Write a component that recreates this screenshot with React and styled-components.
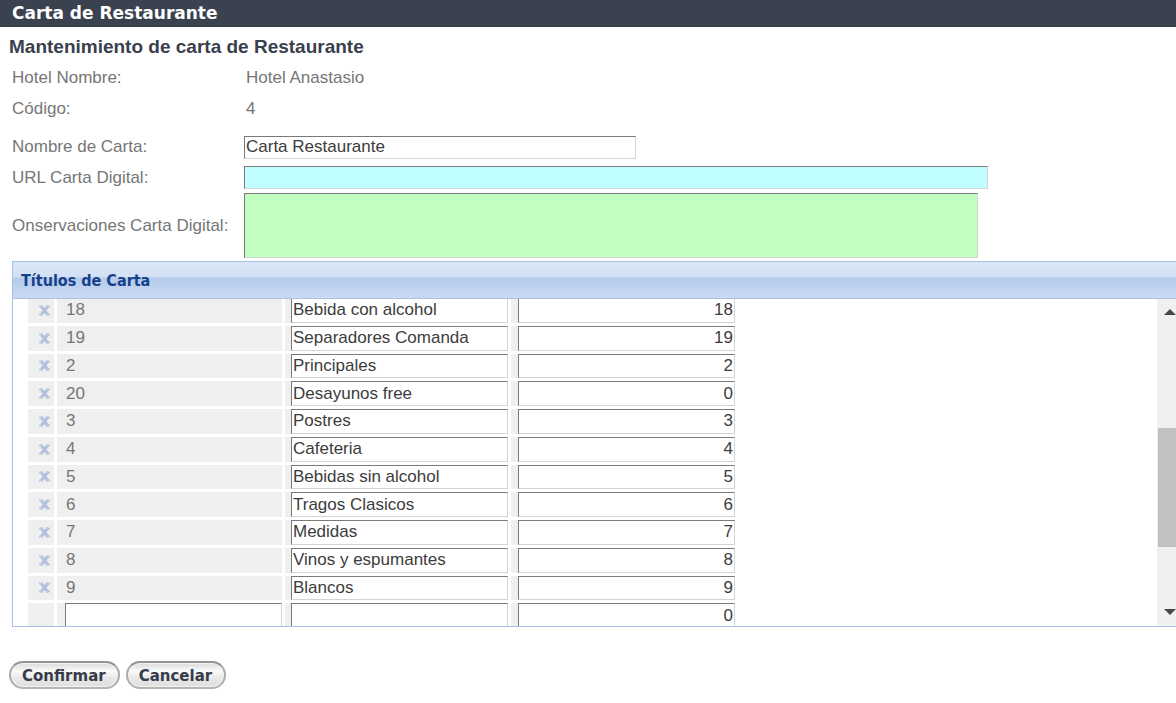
import React from "react";
import styled, { createGlobalStyle, css } from "styled-components";

const GlobalStyle = createGlobalStyle`
  *, *::before, *::after { box-sizing: border-box; }
  body {
    margin: 0;
    background: #fff;
    color: #404040;
    font: 17px/20px "Liberation Sans", Arial, sans-serif;
    overflow-x: hidden;
  }
`;

const sunken = css`
  border: 1px solid;
  border-color: #7a7a7a #d4d4d4 #d4d4d4 #7a7a7a;
  border-radius: 0;
  outline: none;
  color: #3c3c3c;
  font: inherit;
`;

const TitleBar = styled.header`
  background: #3a414f;
  border-bottom: 1px solid #343a46;
`;

const AppTitle = styled.h1`
  margin: 0;
  padding: 0 12px;
  color: #fff;
  font: bold 17px/26px "DejaVu Sans", Verdana, sans-serif;
`;

const PageTitle = styled.h2`
  margin: 0;
  padding: 5px 9px 0;
  color: #3a3f4d;
  font-size: 19px;
  line-height: 30px;
`;

const Group = styled.div`
  margin-top: ${(p) => (p.$spaced ? "8px" : "0")};
  padding-left: 12px;
  color: #767676;
`;

const Field = styled.div`
  display: grid;
  grid-template-columns: 232px minmax(0, 1fr);
  align-items: center;
  min-height: ${(p) => (p.$tall ? "31px" : "30px")};
`;

const Value = styled.output`
  padding-left: 2px;
`;

const TextInput = styled.input`
  ${sunken}
  width: ${(p) => p.$width}px;
  max-width: 100%;
  height: 23px;
  padding: 0 1px;
  background: ${(p) => p.$tint || "#fff"};
`;

const Notes = styled.textarea`
  ${sunken}
  display: block;
  width: 734px;
  max-width: 100%;
  height: 65px;
  padding: 1px;
  background: #c0ffc0;
  resize: none;
`;

const Panel = styled.section`
  margin: 3px 0 0 12px;
  border: 1px solid #a9c1e6;
  border-right: 0;
`;

const PanelTitle = styled.h3`
  margin: 0;
  padding: 1px 8px 0;
  border-bottom: 1px solid #a9c1e6;
  background: linear-gradient(#d9e6f6 0%, #d3e1f4 40%, #b6cbea 46%, #c9daf4 100%);
  color: #15428b;
  font: bold 16px/35px "DejaVu Sans Condensed", Tahoma, sans-serif;
`;

const PanelBody = styled.div`
  display: flex;
  height: 327px;
`;

const Viewport = styled.div`
  flex: 1;
  min-width: 0;
  overflow: hidden;
`;

const Table = styled.table`
  table-layout: fixed;
  width: 713px;
  height: 336px;
  margin: -4px 0 0 12px;
  border-spacing: 3px;
`;

const Cell = styled.td`
  width: ${(p) => p.$width}px;
  height: 1px;
  padding: 0 0 0 ${(p) => p.$inset || 0}px;
  background: #efefef;
  color: #767676;
`;

const CellInput = styled.input`
  ${sunken}
  display: block;
  width: 100%;
  height: 100%;
  padding: 0 1px;
  background: #fff;
  text-align: ${(p) => (p.$numeric ? "right" : "left")};
`;

const DeleteButton = styled.button`
  display: block;
  margin-left: 11px;
  padding: 0;
  border: 0;
  background: none;
  line-height: 0;
`;

const Scrollbar = styled.div`
  display: flex;
  flex-direction: column;
  align-items: flex-end;
  width: 19px;
  padding: 9px 0 10px;
  background: #f0f0f0;
`;

const Track = styled.div`
  flex: 1;
  align-self: stretch;
  padding: 113px 0 0 1px;
`;

const Thumb = styled.div`
  height: 119px;
  background: #c1c1c1;
`;

const Actions = styled.div`
  display: flex;
  gap: 6px;
  padding: 34px 9px 12px;
`;

const ActionButton = styled.button`
  height: 28px;
  padding: 1px 12px 0 11px;
  border: 2px solid;
  border-color: #949494 #ababab #b4b4b4;
  border-radius: 14px;
  background: linear-gradient(#dadada, #fbfbfb 35%, #e9e9e9 60%, #dedede);
  box-shadow: inset 0 0 1px 1px #f4f4f4;
  color: #363c49;
  font: bold 15px/22px "DejaVu Sans", Verdana, sans-serif;
`;

const Arrow = ({ down }) => (
  <svg width="12" height="7" viewBox="0 0 12 7" aria-hidden="true">
    <path d={down ? "M0 0h12L6 6z" : "M0 7h12L6 1z"} fill="#484848" />
  </svg>
);

const Cross = () => (
  <svg width="11" height="11" viewBox="0 0 11 11" aria-hidden="true">
    <path d="M2 1l7 9M9 1l-7 9" stroke="#b3c1de" strokeWidth="3" />
    <path d="M0 1.5h4M7 1.5h4M0 9.5h4M7 9.5h4" stroke="#bdc9e1" strokeWidth="2" />
  </svg>
);

const titles = [
  ["18", "Bebida con alcohol", "18"],
  ["19", "Separadores Comanda", "19"],
  ["2", "Principales", "2"],
  ["20", "Desayunos free", "0"],
  ["3", "Postres", "3"],
  ["4", "Cafeteria", "4"],
  ["5", "Bebidas sin alcohol", "5"],
  ["6", "Tragos Clasicos", "6"],
  ["7", "Medidas", "7"],
  ["8", "Vinos y espumantes", "8"],
  ["9", "Blancos", "9"],
  ["", "", "0"],
];

export default function App() {
  return (
    <>
      <GlobalStyle />
      <TitleBar>
        <AppTitle>Carta de Restaurante</AppTitle>
      </TitleBar>
      <main>
        <PageTitle>Mantenimiento de carta de Restaurante</PageTitle>
        <Group>
          <Field $tall>
            <label htmlFor="hotel">Hotel Nombre:</label>
            <Value id="hotel">Hotel Anastasio</Value>
          </Field>
          <Field $tall>
            <label htmlFor="codigo">Código:</label>
            <Value id="codigo">4</Value>
          </Field>
        </Group>
        <Group $spaced>
          <Field>
            <label htmlFor="nombre">Nombre de Carta:</label>
            <TextInput id="nombre" $width={392} defaultValue="Carta Restaurante" />
          </Field>
          <Field $tall>
            <label htmlFor="url">URL Carta Digital:</label>
            <TextInput id="url" $width={744} $tint="#c0ffff" />
          </Field>
          <Field>
            <label htmlFor="notas">Onservaciones Carta Digital:</label>
            <Notes id="notas" />
          </Field>
        </Group>
        <Panel>
          <PanelTitle>Títulos de Carta</PanelTitle>
          <PanelBody>
            <Viewport>
              <Table>
                <tbody>
                  {titles.map(([code, name, order]) => (
                    <tr key={code}>
                      <Cell $width={26}>
                        {code && (
                          <DeleteButton type="button" aria-label={`Eliminar ${name}`}>
                            <Cross />
                          </DeleteButton>
                        )}
                      </Cell>
                      <Cell $width={225} $inset={code ? 9 : 8}>
                        {code || <CellInput aria-label="Código" />}
                      </Cell>
                      <Cell $width={223} $inset={6}>
                        <CellInput aria-label="Título" defaultValue={name} />
                      </Cell>
                      <Cell $width={224} $inset={7}>
                        <CellInput $numeric aria-label="Orden" defaultValue={order} />
                      </Cell>
                    </tr>
                  ))}
                </tbody>
              </Table>
            </Viewport>
            <Scrollbar>
              <Arrow />
              <Track>
                <Thumb />
              </Track>
              <Arrow down />
            </Scrollbar>
          </PanelBody>
        </Panel>
        <Actions>
          <ActionButton type="button">Confirmar</ActionButton>
          <ActionButton type="button">Cancelar</ActionButton>
        </Actions>
      </main>
    </>
  );
}
